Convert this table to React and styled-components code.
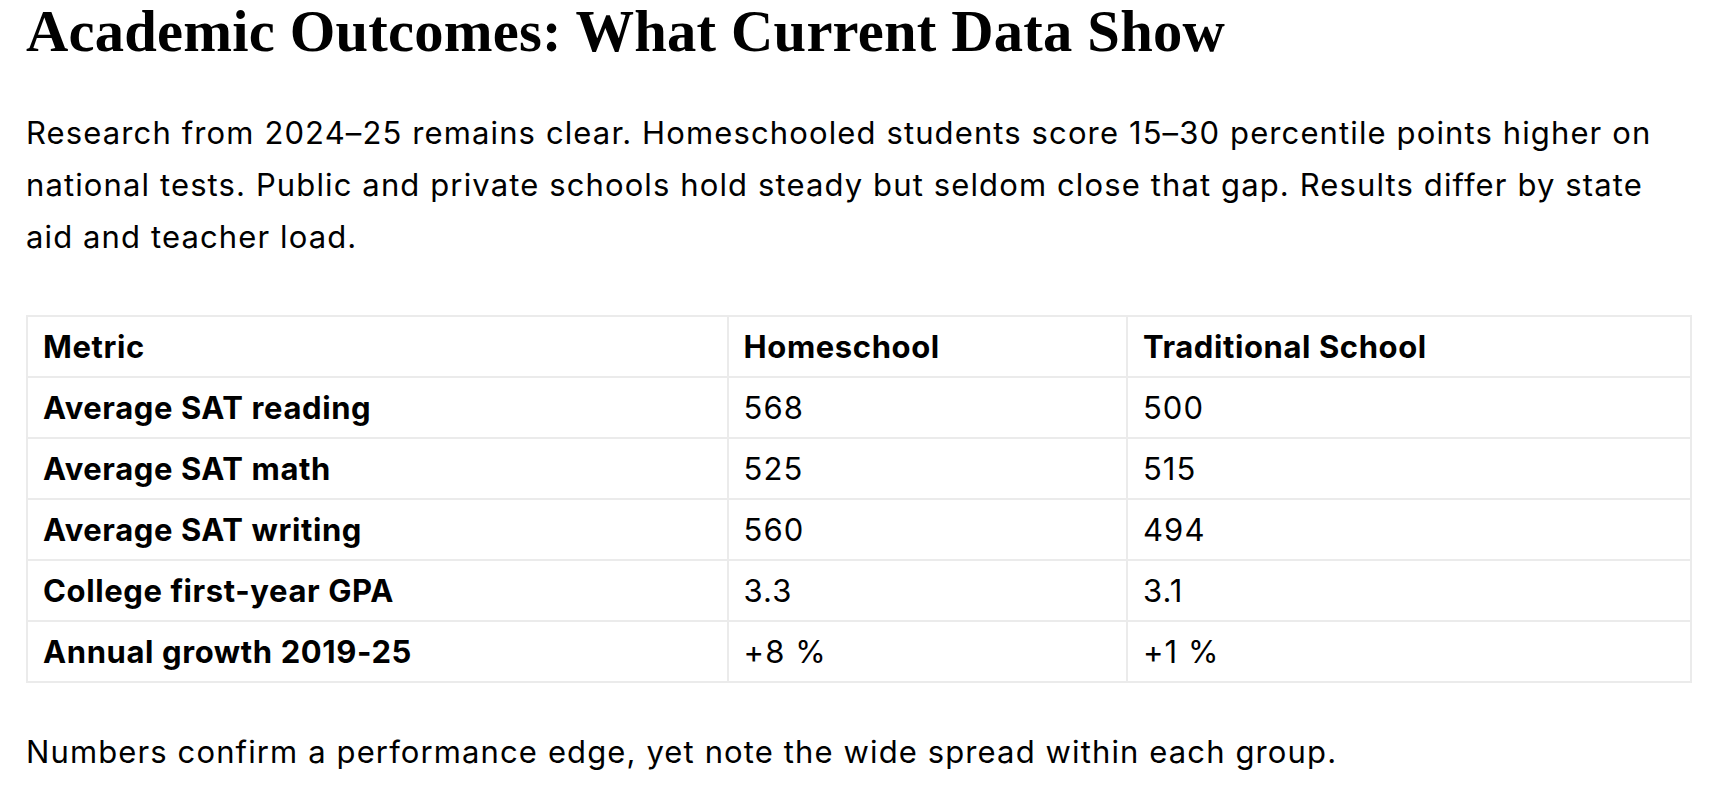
import React from 'react';
import styled, { createGlobalStyle } from 'styled-components';

const GlobalStyle = createGlobalStyle`
  html, body {
    margin: 0;
    padding: 0;
    background: #ffffff;
  }
  body {
    color: #000000;
    font-family: 'Inter', 'Open Sans', sans-serif;
  }
`;

const Article = styled.article`
  padding: 0 28px 0 26px;
`;

const Heading = styled.h2`
  margin: 0 0 43px;
  font-family: 'Liberation Serif', 'DejaVu Serif', serif;
  font-weight: 700;
  font-size: 58.6px;
  line-height: 1.1;
  letter-spacing: 0.2px;
`;

const Paragraph = styled.p`
  margin: 0 0 ${props => props.$gap || 0}px;
  font-size: 31px;
  line-height: 52px;
  letter-spacing: 1.12px;
`;

const Table = styled.table`
  width: 100%;
  border-collapse: collapse;
  margin-bottom: 43px;
  font-size: 31px;
`;

const Cell = styled.td`
  border: 2px solid #ebebeb;
  padding: 3.5px 15px;
  line-height: 52px;
  text-align: left;
  vertical-align: middle;
  font-weight: ${props => (props.$bold ? 700 : 400)};
  letter-spacing: ${props => (props.$bold ? '0.6px' : '1.12px')};
  width: ${props => props.$width || 'auto'};
`;

const columns = [
  { label: 'Metric', width: '42.1%' },
  { label: 'Homeschool', width: '24%' },
  { label: 'Traditional School', width: '33.9%' },
];

const rows = [
  ['Average SAT reading', '568', '500'],
  ['Average SAT math', '525', '515'],
  ['Average SAT writing', '560', '494'],
  ['College first-year GPA', '3.3', '3.1'],
  ['Annual growth 2019-25', '+8 %', '+1 %'],
];

export default function App() {
  return (
    <>
      <GlobalStyle />
      <Article>
        <Heading>Academic Outcomes: What Current Data Show</Heading>
        <Paragraph $gap={52}>
          Research from 2024–25 remains clear. Homeschooled students score 15–30
          percentile points higher on national tests. Public and private schools
          hold steady but seldom close that gap. Results differ by state aid and
          teacher load.
        </Paragraph>
        <Table>
          <thead>
            <tr>
              {columns.map(col => (
                <Cell as="th" key={col.label} $bold $width={col.width}>
                  {col.label}
                </Cell>
              ))}
            </tr>
          </thead>
          <tbody>
            {rows.map(([metric, home, traditional]) => (
              <tr key={metric}>
                <Cell $bold>{metric}</Cell>
                <Cell>{home}</Cell>
                <Cell>{traditional}</Cell>
              </tr>
            ))}
          </tbody>
        </Table>
        <Paragraph>
          Numbers confirm a performance edge, yet note the wide spread within each
          group.
        </Paragraph>
      </Article>
    </>
  );
}
